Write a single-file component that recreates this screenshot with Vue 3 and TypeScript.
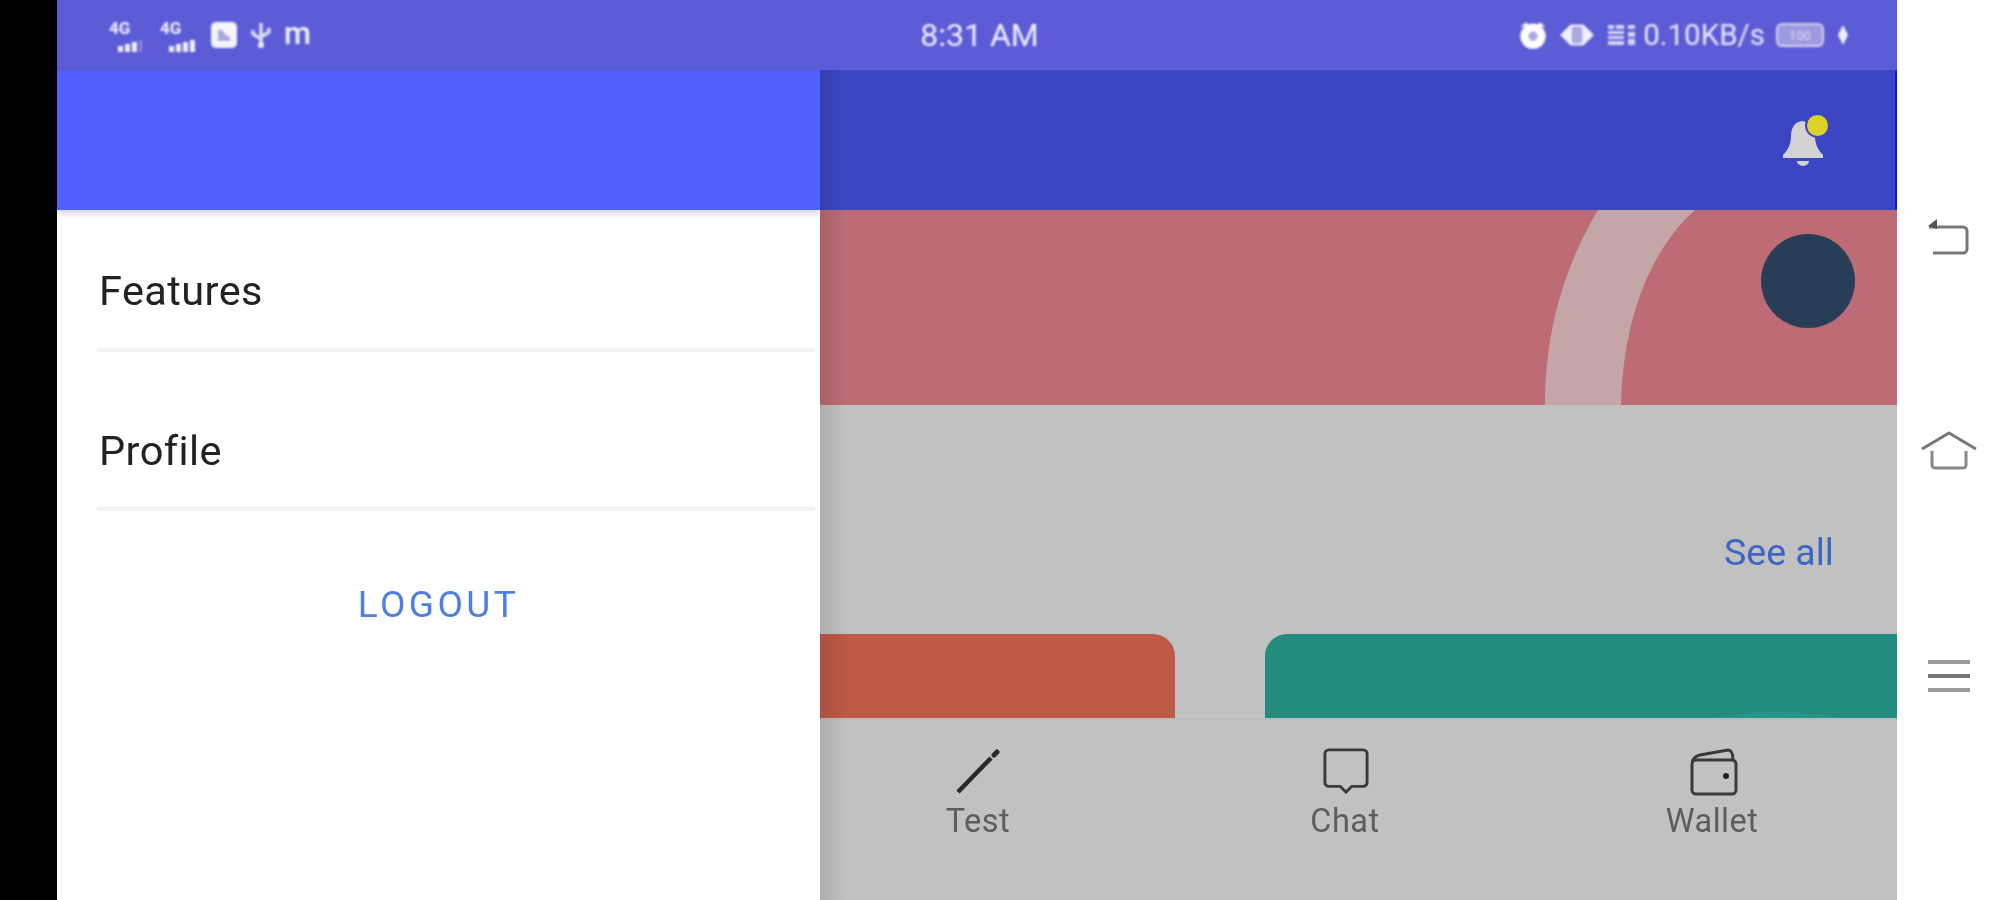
<script setup lang="ts">
const menu: string[] = ['Features', 'Profile']
</script>

<template>
  <div class="screen">
    <div class="black"></div>
    <div class="phone">
      <header class="status">
        <div class="st-left">
          <span class="net"><b>4G</b><svg width="36" height="13" viewBox="0 0 36 13"><rect x="7" y="7" width="5" height="6" /><rect x="14" y="5" width="5" height="8" /><rect x="21" y="3" width="5" height="10" /><rect x="28" y="1" width="3" height="12" opacity=".3" /></svg></span>
          <span class="net"><b>4G</b><svg width="36" height="13" viewBox="0 0 36 13"><rect x="7" y="7" width="5" height="6" /><rect x="14" y="5" width="5" height="8" /><rect x="21" y="3" width="5" height="10" /><rect x="28" y="1" width="5" height="12" /></svg></span>
          <svg class="ic-sq" width="26" height="26" viewBox="0 0 26 26"><rect width="26" height="26" rx="5" fill="#f4f4fb" /><path d="M7 19V8h4l3 4 2 2 3 1v4z" fill="#a9a8e2" /></svg>
          <svg class="ic-usb" width="22" height="26" viewBox="0 0 22 26"><path d="M11 1v24M3 8v4l8 5M19 6v4l-8 5" fill="none" stroke="#dcdcf6" stroke-width="3.4" /><circle cx="11" cy="23" r="3" fill="#eeeefa" /></svg>
          <span class="carrier">m</span>
        </div>
        <div class="clock">8:31 AM</div>
        <div class="st-right">
          <svg width="30" height="30" viewBox="0 0 26 26"><path d="M2 6l5-4 3 3M24 6l-5-4-3 3" fill="#fff" /><circle cx="13" cy="14" r="11" fill="#fff" /><circle cx="13" cy="14" r="4" fill="#a9a8e2" /></svg>
          <svg width="36" height="26" viewBox="0 0 34 24"><path d="M1 12 11 2h12l10 10-10 10H11z" fill="#f1f1fb" /><rect x="12" y="4" width="10" height="16" rx="3" fill="#a9a8e2" /></svg>
          <svg width="32" height="24" viewBox="0 0 30 24" fill="#d8d8f4"><rect x="1" y="2" width="6" height="4" /><rect x="9" y="2" width="8" height="4" /><rect x="1" y="8" width="16" height="3" /><rect x="1" y="13" width="16" height="3" /><rect x="1" y="18" width="16" height="4" /><rect x="21" y="2" width="7" height="4" /><rect x="21" y="9" width="7" height="5" /><rect x="21" y="16" width="7" height="6" /></svg>
          <span class="speed">0.10KB/s</span>
          <span class="battery"><i>100</i></span>
          <svg width="12" height="24" viewBox="0 0 12 24"><path d="M6 2l5 10-5 10-5-10z" fill="#f2f2fc" /></svg>
        </div>
      </header>

      <div class="body">
        <aside class="drawer">
          <div class="drawer-head"></div>
          <nav class="drawer-list">
            <div v-for="item in menu" :key="item" class="drawer-item"><span>{{ item }}</span></div>
          </nav>
          <div class="logout">LOGOUT</div>
        </aside>

        <main class="main">
          <div class="edge"></div>
          <div class="top">
            <div class="bell">
              <svg width="44" height="50" viewBox="0 0 44 50"><path d="M20 4c-8 1-11 8-11 15 0 8-3 14-8 19v3h40v-3c-5-5-8-11-8-19 0-8-5-14-13-15z" fill="#d4d3d3" /><path d="M15 44h12a6 5 0 0 1-12 0z" fill="#d4d3d3" /></svg>
              <span class="dot"></span>
            </div>
          </div>
          <div class="banner">
            <svg class="arc" width="160" height="195" viewBox="0 0 160 195"><path d="M53 0H150C105 40 78 110 76 195H0C0 120 20 55 53 0z" fill="#c4a6a6" /></svg>
            <div class="avatar"></div>
          </div>
          <div class="middle">
            <a class="see-all">See all</a>
          </div>
          <div class="cards">
            <div class="card orange"></div>
            <div class="card teal">
              <svg class="ripple" width="130" height="8" viewBox="0 0 130 8"><path d="M0 8C40 0 90 0 130 8z" fill="#2a9a8c" opacity=".6" /></svg>
            </div>
          </div>
          <footer class="tabs">
            <div class="tab">
              <svg width="48" height="48" viewBox="0 0 48 48"><path d="M4 44 37 10" fill="none" stroke="#2a2a2a" stroke-width="4.5" /><path d="M40 7l3-3" fill="none" stroke="#2a2a2a" stroke-width="5" stroke-linecap="round" /></svg>
              <span>Test</span>
            </div>
            <div class="tab">
              <svg class="chat" width="48" height="46" viewBox="0 0 48 48"><path d="M6 2h36a4 4 0 0 1 4 4v30a4 4 0 0 1-4 4H30l-6 6-6-6H6a4 4 0 0 1-4-4V6a4 4 0 0 1 4-4z" fill="none" stroke="#3a3a3a" stroke-width="3" /></svg>
              <span>Chat</span>
            </div>
            <div class="tab">
              <svg class="wallet" width="48" height="48" viewBox="0 0 48 48"><path d="M6 46h36a4 4 0 0 0 4-4V16a4 4 0 0 0-4-4H6a4 4 0 0 0-4 4v26a4 4 0 0 0 4 4zM2 16c0-6 4-8 8-9l28-5c3 0 5 3 5 10" fill="none" stroke="#3a3a3a" stroke-width="3" /><circle cx="36" cy="28" r="3" fill="#222" /></svg>
              <span>Wallet</span>
            </div>
          </footer>
        </main>
      </div>
    </div>

    <aside class="softkeys">
      <svg class="key-back" width="46" height="38" viewBox="0 0 46 38"><path d="M4 9h34a4 4 0 0 1 4 4v18a4 4 0 0 1-4 4H8" fill="none" stroke="#777" stroke-width="3" /><path d="M12 1v10L3 8z" fill="#555" /></svg>
      <svg class="key-home" width="58" height="42" viewBox="0 0 58 42"><path d="M2 20 29 4l27 16" fill="none" stroke="#777" stroke-width="3" /><path d="M12 22v14a3 3 0 0 0 3 3h28a3 3 0 0 0 3-3V22" fill="none" stroke="#888" stroke-width="3" /></svg>
      <div class="key-menu"><i></i><i></i><i></i></div>
    </aside>
  </div>
</template>

<style scoped>
.screen {
  display: flex;
  width: 2003px;
  height: 900px;
  overflow: hidden;
  background: #fff;
  font-family: Roboto, "Liberation Sans", sans-serif;
}
.black { width: 57px; flex: none; background: #000; }
.phone { width: 1840px; flex: none; display: flex; flex-direction: column; }

.status {
  height: 70px;
  flex: none;
  background: #5c5cd6;
  color: #f2f2fc;
  display: grid;
  grid-template-columns: 1fr auto 1fr;
  align-items: center;
  padding: 0 48px 0 52px;
}
.st-left, .clock, .st-right { filter: blur(0.8px); }
.st-left { display: flex; align-items: center; gap: 13px; }
.net { position: relative; display: block; width: 38px; height: 32px; margin-top: 2px; }
.net svg { position: absolute; left: 2px; bottom: 0; fill: #f0f0fb; }
.net b { position: absolute; left: 0; top: 0; font-size: 17px; line-height: 17px; font-weight: 700; }
.ic-usb { margin: 0; }
.carrier { font-size: 31px; line-height: 31px; font-weight: 500; margin: -4px 0 0 -1px; }
.clock { font-size: 32px; font-weight: 400; margin-left: 1px; }
.st-right { display: flex; align-items: center; justify-content: flex-end; gap: 11px; }
.speed { font-size: 29.5px; color: #e8e8f9; margin-left: -6px; }
.battery {
  width: 48px;
  height: 24px;
  margin: 0 2px 0 0;
  border: 2px solid #d5d5f3;
  border-radius: 6px;
  background: #9c9be0;
  display: flex;
  align-items: center;
  justify-content: center;
  box-sizing: border-box;
}
.battery i { font-style: normal; font-size: 13px; color: #dcdcf6; }

.body { flex: 1; display: flex; min-height: 0; }

.drawer { width: 763px; flex: none; display: flex; flex-direction: column; background: #fff; }
.drawer-head { height: 140px; flex: none; background: #5060ff; box-shadow: 0 3px 7px rgba(0, 0, 0, .2); position: relative; }
.drawer-list { display: flex; flex-direction: column; padding-left: 40px; padding-right: 5px; }
.drawer-item {
  height: 159px;
  box-sizing: border-box;
  display: flex;
  align-items: center;
  padding: 41px 0 0 2px;
  border-bottom: 4px solid #f3f3f3;
  font-size: 41.5px;
  letter-spacing: .4px;
  color: #222;
}
.drawer-item span { filter: blur(0.7px); }
.drawer-item:first-child { height: 142px; padding-top: 22px; }
.logout {
  margin-top: 72px;
  text-align: center;
  font-size: 37px;
  letter-spacing: 3.4px;
  color: #4f7fe0;
  filter: blur(0.7px);
}

.main { position: relative; flex: 1; min-width: 0; display: flex; flex-direction: column; background: #c1c1c1; }
.edge {
  position: absolute;
  left: 0; top: 0; bottom: 0;
  width: 26px;
  z-index: 2;
  background: linear-gradient(to right, rgba(0, 0, 0, .1), rgba(0, 0, 0, 0));
}
.top { height: 140px; flex: none; background: #3c46c4; display: flex; justify-content: flex-end; align-items: flex-start; padding: 0 69px 0 0; border-right: 2px solid #0a1ac8; box-sizing: border-box; }
.bell { position: relative; margin-top: 47px; height: 50px; filter: blur(0.7px); }
.dot { position: absolute; right: -2px; top: -2px; width: 21px; height: 21px; border-radius: 50%; background: #dcd228; box-shadow: 0 0 0 2px #3c46c4; }

.banner { position: relative; height: 195px; flex: none; background: #bd6b74; overflow: hidden; display: flex; justify-content: flex-end; padding: 24px 42px 0 0; box-sizing: border-box; }
.arc { position: absolute; left: 725px; top: 0; }
.avatar { width: 94px; height: 94px; border-radius: 50%; background: #283d57; position: relative; }

.middle { height: 229px; flex: none; display: flex; justify-content: flex-end; align-items: flex-start; padding: 125px 63px 0 0; box-sizing: border-box; }
.see-all { font-size: 37.5px; color: #3d66c4; filter: blur(0.7px); }

.cards { height: 84px; flex: none; display: flex; gap: 90px; overflow: hidden; }
.card { height: 84px; border-radius: 22px 22px 0 0; flex: none; position: relative; }
.orange { width: 355px; background: #bc5a46; border-top-left-radius: 0; }
.teal { flex: 1; background: #238c7f; border-top-right-radius: 0; }
.ripple { position: absolute; right: 55px; bottom: 0; }

.tabs { flex: 1; display: flex; gap: 247px; padding: 28px 0 0 98px; box-sizing: border-box; border-top: 2px solid #bcbcbc; }
.tab { width: 120px; display: flex; flex-direction: column; align-items: center; filter: blur(0.7px); }
.chat { margin: 0 0 2px 2px; }
.wallet { margin-left: 3px; }
.tab span { font-size: 32.5px; line-height: 36px; margin-top: 7px; color: #5d5d5d; letter-spacing: .5px; }

.softkeys { flex: 1; position: relative; background: #fff; display: flex; flex-direction: column; align-items: center; }
.softkeys > * { filter: blur(0.7px); }
.key-back { margin-top: 218px; margin-left: -4px; }
.key-home { margin-top: 173px; margin-left: -2px; }
.key-menu { margin-top: 189px; margin-left: -2px; width: 42px; display: flex; flex-direction: column; gap: 10px; }
.key-menu i { display: block; height: 4px; background: #9a9a9a; }
.key-menu i:nth-child(2) { background: #777; }
</style>
